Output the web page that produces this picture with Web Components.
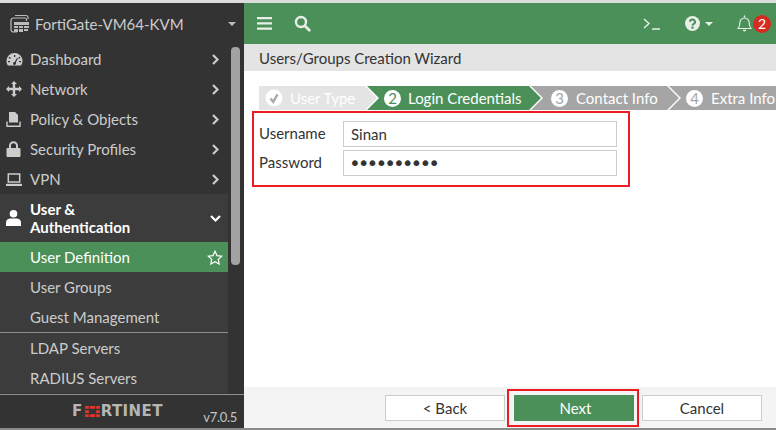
<!DOCTYPE html>
<html>
<head>
<meta charset="utf-8">
<style>
  html, body { margin: 0; padding: 0; background: #fff; }
  body { width: 776px; height: 430px; overflow: hidden; font-family: Lato, "Liberation Sans", sans-serif; }
</style>
</head>
<body>
<fg-app>
  <fg-sidebar slot="side" title="FortiGate-VM64-KVM" version="v7.0.5">
    <fg-nav-item icon="dash" arrow="right">Dashboard</fg-nav-item>
    <fg-nav-item icon="move" arrow="right">Network</fg-nav-item>
    <fg-nav-item icon="policy" arrow="right">Policy &amp; Objects</fg-nav-item>
    <fg-nav-item icon="lock" arrow="right">Security Profiles</fg-nav-item>
    <fg-nav-item icon="laptop" arrow="right">VPN</fg-nav-item>
    <fg-nav-item icon="user" arrow="down" open>User &amp;<br>Authentication</fg-nav-item>
    <fg-nav-item sub active>User Definition</fg-nav-item>
    <fg-nav-item sub>User Groups</fg-nav-item>
    <fg-nav-item sub divider>Guest Management</fg-nav-item>
    <fg-nav-item sub>LDAP Servers</fg-nav-item>
    <fg-nav-item sub>RADIUS Servers</fg-nav-item>
  </fg-sidebar>
  <fg-topbar slot="top"></fg-topbar>
  <fg-wizard slot="main" heading="Users/Groups Creation Wizard">
    <fg-stepper slot="steps">
      <fg-step state="done" width="118" pad="6" gap="7">User Type</fg-step>
      <fg-step state="active" num="2" width="174" pad="17" gap="7">Login Credentials</fg-step>
      <fg-step num="3" width="148" pad="20" gap="8">Contact Info</fg-step>
      <fg-step num="4" width="120" pad="17" gap="8">Extra Info</fg-step>
    </fg-stepper>
    <fg-form slot="form">
      <fg-field label="Username" value="Sinan"></fg-field>
      <fg-field label="Password" value="••••••••••" secret></fg-field>
    </fg-form>
    <fg-button slot="actions">&lt; Back</fg-button>
    <fg-button slot="actions" primary>Next</fg-button>
    <fg-button slot="actions">Cancel</fg-button>
  </fg-wizard>
</fg-app>

<script>
const ICONS = {
  dash: '<svg width="17" height="15" viewBox="0 0 17 15"><path fill="#ccc" fill-rule="evenodd" d="M8.5 1A8 8 0 0 0 .5 9c0 1.7.5 3.2 1.4 4.5h13.2A8 8 0 0 0 16.500 9a8 8 0 0 0-8-8ZM8 3h1.300v2H8ZM3.500 4.800l1.400 1.300-1 1L2.600 5.800ZM13.500 4.800l.9 1-1.300 1.300-1-1ZM11 6l1 .6L9.800 10.500a1.500 1.500 0 1 1-1.100-.6ZM2 9h2v1.300H2ZM13 9h2v1.300h-2Z"/></svg>',
  move: '<svg width="16" height="16" viewBox="0 0 16 16"><path fill="#ccc" d="M8 0l3 3H9.200v3.800H13V5l3 3-3 3V9.200H9.200V13H11l-3 3-3-3h1.800V9.200H3V11L0 8l3-3v1.800h3.800V3H5Z"/></svg>',
  policy: '<svg width="15" height="15" viewBox="0 0 15 15"><path fill="#ccc" d="M3 0h6l3 3v7.500H3Z"/><path fill="none" stroke="#ccc" stroke-width="1.400" d="M1 9.500v4.800h13V9.500"/></svg>',
  lock: '<svg width="15" height="16" viewBox="0 0 15 16"><path fill="#ccc" d="M3 7V4.800a4.500 4.500 0 0 1 9 0V7h1.500a1 1 0 0 1 1 1v7a1 1 0 0 1-1 1H1.500a1 1 0 0 1-1-1V8a1 1 0 0 1 1-1ZM5 7h5V4.800a2.500 2.500 0 0 0-5 0Z"/></svg>',
  laptop: '<svg width="16" height="13" viewBox="0 0 16 13"><path fill="none" stroke="#ccc" stroke-width="1.500" d="M2.300 1h11.400v8H2.300Z"/><path fill="#ccc" d="M0 10.800h16V13H0Z"/></svg>',
  user: '<svg width="15" height="16" viewBox="0 0 15 16"><circle cx="7.500" cy="3.800" r="3.800" fill="#fff"/><path fill="#fff" d="M0 16v-3.500C0 9.800 2.200 8.500 4.500 8.500h6c2.300 0 4.500 1.300 4.500 4V16Z"/></svg>'
};
const CHEVRON = {
  right: '<svg width="7" height="11" viewBox="0 0 7 11"><path fill="none" stroke="#ccc" stroke-width="2.200" d="M1 1l4.500 4.500L1 10"/></svg>',
  down: '<svg width="11" height="7" viewBox="0 0 11 7"><path fill="none" stroke="#fff" stroke-width="2.200" d="M1 1l4.500 4.500L10 1"/></svg>'
};
const STAR = '<svg width="16" height="15" viewBox="0 0 16 15"><path fill="none" stroke="#fff" stroke-width="1.200" d="M8 1.300l2 4.300 4.700.6-3.400 3.200.9 4.600L8 11.700 3.800 14l.9-4.600L1.300 6.200 6 5.600Z"/></svg>';

class FgApp extends HTMLElement {
  constructor() {
    super();
    this.attachShadow({ mode: 'open' }).innerHTML = `
      <style>
        :host { display: grid; grid-template-columns: 244px 532px; grid-template-rows: 41px 384px; padding-top: 3px; height: 427px; box-sizing: border-box; position: relative; background: #fff; }
        :host::before { content: ""; position: absolute; left: 0; right: 0; top: 0; height: 3px; background: #dcdcdc; }
        :host::after { content: ""; position: absolute; left: 0; right: 0; top: 428px; height: 2px; background: #8a8a8a; }
        .side { grid-row: 1 / 3; display: block; min-height: 0; }
      </style>
      <div class="side"><slot name="side"></slot></div>
      <slot name="top"></slot>
      <slot name="main"></slot>`;
  }
}

class FgSidebar extends HTMLElement {
  constructor() {
    super();
    this.attachShadow({ mode: 'open' }).innerHTML = `
      <style>
        :host { display: flex; flex-direction: column; width: 244px; height: 425px; background: #333; color: #ccc; font: 15px/20px Lato, sans-serif; }
        .head { height: 41px; display: flex; align-items: center; padding-left: 10px; box-sizing: border-box; flex: none; }
        .head svg.dev { margin-right: 5px; }
        .name { flex: 1; font-size: 15px; }
        .caret { width: 0; height: 0; border: 4px solid transparent; border-top: 4px solid #bbb; border-bottom: 0; margin-right: 8px; }
        .body { height: 350px; display: flex; flex: none; overflow: hidden; }
        .menu { width: 228px; flex: none; }
        .track { width: 16px; flex: none; padding: 3px 4px 0 3px; box-sizing: border-box; }
        .thumb { width: 9px; height: 218px; background: #a3a3a3; border-radius: 4px; }
        .foot { height: 34px; flex: none; border-top: 1px solid #8f8f8f; display: flex; position: relative; box-sizing: border-box; }
        .logo { position: absolute; left: 72px; top: 10px; display: flex; align-items: center; color: #b5b5b5; font: 700 15px/13px "DejaVu Sans", sans-serif; letter-spacing: 0.400px; }
        .logo svg { margin: 0 1px 0 2px; }
        .ver { position: absolute; right: 7px; top: 12px; font-size: 13px; line-height: 20px; letter-spacing: -0.300px; color: #c4c4c4; }
      </style>
      <div class="head">
        <svg class="dev" width="20" height="20" viewBox="0 0 20 20"><path fill="none" stroke="#bbb" stroke-width="1.200" d="M5 1.500h11a2 2 0 0 1 2 2V5M3 4h12a1.500 1.500 0 0 1 1.500 1.500V7M3.500 4A2.500 2.500 0 0 0 1 6.500v9A2.500 2.500 0 0 0 3.500 18H7"/><path fill="#bbb" d="M4 8h15v3H4ZM4 12h4v2H4ZM9 12h4v2H9ZM14 12h5v2h-5ZM4 15h4v3H4ZM9 15h4v3H9ZM14 15h4v2h-4Z"/></svg>
        <span class="name">${this.getAttribute('title')}</span>
        <span class="caret"></span>
      </div>
      <div class="body">
        <div class="menu"><slot></slot></div>
        <div class="track"><div class="thumb"></div></div>
      </div>
      <div class="foot">
        <div class="logo">F<svg width="15" height="11" viewBox="0 0 16 12"><path fill="#e0362c" d="M0 0h4v3H0ZM5 0h6v3H5ZM12 0h4v3h-4ZM0 4.500h4v3H0ZM12 4.500h4v3h-4ZM0 9h4v3H0ZM5 9h6v3H5ZM12 9h4v3h-4Z"/></svg>RTINET</div>
        <div class="ver">${this.getAttribute('version')}</div>
      </div>`;
  }
}

class FgNavItem extends HTMLElement {
  constructor() {
    super();
    const icon = ICONS[this.getAttribute('icon')] || '';
    const arrow = CHEVRON[this.getAttribute('arrow')] || '';
    const active = this.hasAttribute('active');
    this.attachShadow({ mode: 'open' }).innerHTML = `
      <style>
        :host { display: block; }
        .row { display: flex; align-items: center; height: 30px; box-sizing: border-box; padding-left: 6px; color: #ccc; font-size: 15px; line-height: 18px; }
        .ic { width: 24px; flex: none; display: flex; align-items: center; }
        .label { flex: 1; }
        .end { width: 17px; flex: none; display: flex; justify-content: flex-start; padding-left: 1px; box-sizing: border-box; }
        :host([sub]) .row { padding-left: 30px; }
        :host([open]) .row { height: 48px; background: #3c3c3c; color: #fff; font-weight: 700; }
        :host([open]) .end { width: 18px; padding-left: 0; }
        :host([sub]) { background: #3c3c3c; }
        :host([active]) .row { background: #4a9058; color: #fff; }
        :host([active]) .end { padding-left: 0; margin-right: 5px; width: 16px; }
        :host([divider]) { border-bottom: 1px solid #8f8f8f; }
        :host([divider]) .row { color: #ccc; }
      </style>
      <div class="row">
        ${icon ? `<span class="ic">${icon}</span>` : ''}
        <span class="label"><slot></slot></span>
        ${arrow ? `<span class="end">${arrow}</span>` : ''}
        ${active ? `<span class="end">${STAR}</span>` : ''}
      </div>`;
  }
}

class FgTopbar extends HTMLElement {
  constructor() {
    super();
    this.attachShadow({ mode: 'open' }).innerHTML = `
      <style>
        :host { display: flex; align-items: center; height: 41px; background: #4a9058; box-sizing: border-box; padding-left: 13px; position: relative; }
        svg { display: block; flex: none; }
        .search { margin-left: 22px; }
        .sp { flex: 1; }
        .cli { margin-right: 25px; }
        .caret { width: 0; height: 0; border: 4px solid transparent; border-top: 4px solid #e8efe9; border-bottom: 0; margin: 0 24px 0 5px; }
        .bell { margin-right: 24px; }
        .badge { position: absolute; right: 5px; top: 12px; width: 18px; height: 18px; border-radius: 50%; background: #d42c20; color: #fff; font: 14px/18px Lato, sans-serif; text-align: center; }
      </style>
      <svg width="15" height="13" viewBox="0 0 15 13"><path fill="#e8efe9" d="M0 0h15v2.200H0ZM0 5.300h15v2.200H0ZM0 10.600h15v2.200H0Z"/></svg>
      <svg class="search" width="17" height="17" viewBox="0 0 17 17"><circle cx="7" cy="7" r="5" fill="none" stroke="#e8efe9" stroke-width="2.400"/><path stroke="#e8efe9" stroke-width="2.800" stroke-linecap="round" d="M11 11l4.300 4.300"/></svg>
      <span class="sp"></span>
      <svg class="cli" width="17" height="12" viewBox="0 0 17 12"><path fill="none" stroke="#e8efe9" stroke-width="1.400" d="M1 1l5 4.500L1 10M9 11h8"/></svg>
      <svg width="15" height="15" viewBox="0 0 15 15"><circle cx="7.500" cy="7.500" r="7.500" fill="#e8efe9"/><path fill="none" stroke="#4a9058" stroke-width="2" d="M5 5.800a2.500 2.300 0 1 1 3.700 2c-.8.500-1.200.9-1.200 1.700"/><path fill="#4a9058" d="M6.400 10.500h2.200v2.200H6.400Z"/></svg>
      <span class="caret"></span>
      <svg class="bell" width="15" height="17" viewBox="0 0 15 17"><path fill="none" stroke="#e8efe9" stroke-width="1.100" d="M1 13.500c1.200-1.300 1.800-2.500 1.800-5.500a4.700 5 0 0 1 9.400 0c0 3 .6 4.200 1.800 5.500Z"/><path fill="#e8efe9" d="M5.800 14.700h3.400a1.700 1.700 0 0 1-3.400 0ZM6.800.5h1.400v2H6.800Z"/></svg>
      <span class="badge">2</span>`;
  }
}

class FgWizard extends HTMLElement {
  constructor() {
    super();
    this.attachShadow({ mode: 'open' }).innerHTML = `
      <style>
        :host { display: flex; flex-direction: column; width: 532px; height: 384px; background: #fff; overflow: hidden; }
        .title { height: 27px; flex: none; background: #e4e4e4; color: #333; font: 15px/28px Lato, sans-serif; padding-left: 15px; }
        .content { flex: 1; padding: 15px 0 0 8px; box-sizing: border-box; min-height: 0; }
        .foot { height: 41px; flex: none; background: #f4f4f4; display: flex; align-items: flex-start; padding: 8px 0 0 141px; box-sizing: border-box; }
      </style>
      <div class="title">${this.getAttribute('heading')}</div>
      <div class="content">
        <slot name="steps"></slot>
        <slot name="form"></slot>
      </div>
      <div class="foot"><slot name="actions"></slot></div>`;
  }
}

class FgStepper extends HTMLElement {
  constructor() {
    super();
    this.attachShadow({ mode: 'open' }).innerHTML = `
      <style>
        :host { display: flex; height: 24px; margin-left: 7px; width: 517px; overflow: hidden; }
      </style>
      <slot></slot>`;
  }
}

class FgStep extends HTMLElement {
  constructor() {
    super();
    const state = this.getAttribute('state') || '';
    const done = state === 'done';
    const mark = done
      ? '<svg width="18" height="18" viewBox="0 0 18 18"><circle cx="9" cy="9" r="8.500" fill="#fff"/><path fill="none" stroke="#aaa" stroke-width="2.400" d="M5.500 9.500l2.700 3.300 4.300-7.500"/></svg>'
      : `<span class="num">${this.getAttribute('num')}</span>`;
    this.attachShadow({ mode: 'open' }).innerHTML = `
      <style>
        :host { display: flex; flex: none; align-items: center; height: 24px; box-sizing: border-box; margin-left: -10px; background: #a5a5a5; color: #fff; font: 15px/24px Lato, sans-serif; white-space: nowrap;
          clip-path: polygon(0 0, calc(100% - 12px) 0, 100% 50%, calc(100% - 12px) 100%, 0 100%, 12px 50%); }
        :host([state="done"]) { margin-left: 0; background: #e4e4e4; clip-path: polygon(0 0, calc(100% - 12px) 0, 100% 50%, calc(100% - 12px) 100%, 0 100%); }
        :host([state="active"]) { background: #4a9058; }
        .mark { display: flex; flex: none; }
        .num { width: 17px; height: 17px; border-radius: 50%; background: #fff; color: #a5a5a5; font-size: 15px; line-height: 17px; text-align: center; }
        :host([state="active"]) .num { color: #4a9058; }
      </style>
      <span class="mark">${mark}</span><span class="txt"><slot></slot></span>`;
    this.style.width = this.getAttribute('width') + 'px';
    this.style.paddingLeft = this.getAttribute('pad') + 'px';
    this.shadowRoot.querySelector('.txt').style.marginLeft = this.getAttribute('gap') + 'px';
  }
}

class FgForm extends HTMLElement {
  constructor() {
    super();
    this.attachShadow({ mode: 'open' }).innerHTML = `
      <style>
        :host { display: flex; flex-direction: column; gap: 3px; width: 378px; height: 76px; margin-top: 1px; box-sizing: border-box; border: 2px solid #ed1c24; padding: 8px 0 0 5px; }
      </style>
      <slot></slot>`;
  }
}

class FgField extends HTMLElement {
  constructor() {
    super();
    const secret = this.hasAttribute('secret');
    this.attachShadow({ mode: 'open' }).innerHTML = `
      <style>
        :host { display: flex; align-items: center; height: 26px; color: #333; font: 15px/20px Lato, sans-serif; }
        label { width: 84px; flex: none; margin-top: -2px; }
        .box { width: 274px; height: 26px; box-sizing: border-box; border: 1px solid #ccc; padding-left: 7px; line-height: 25px; color: #333; }
        .box.secret { font: 20px/25px "DejaVu Sans", sans-serif; letter-spacing: -3px; padding-left: 5px; color: #333; }
      </style>
      <label>${this.getAttribute('label')}</label>
      <div class="box${secret ? ' secret' : ''}">${this.getAttribute('value')}</div>`;
  }
}

class FgButton extends HTMLElement {
  constructor() {
    super();
    this.attachShadow({ mode: 'open' }).innerHTML = `
      <style>
        :host { display: block; position: relative; width: 120px; height: 26px; box-sizing: border-box; margin-right: 9px; background: #fff; border: 1px solid #ccc; color: #333; font: 15px/24px Lato, sans-serif; text-align: center; }
        :host([primary]) { background: #4a9058; border-color: #4a9058; color: #fff; margin-right: 8px; padding-left: 3px; }
        :host([primary])::after { content: ""; position: absolute; left: -8px; right: -6px; top: -7px; bottom: -7px; border: 2px solid #ed1c24; }
      </style>
      <slot></slot>`;
  }
}

customElements.define('fg-app', FgApp);
customElements.define('fg-sidebar', FgSidebar);
customElements.define('fg-nav-item', FgNavItem);
customElements.define('fg-topbar', FgTopbar);
customElements.define('fg-wizard', FgWizard);
customElements.define('fg-stepper', FgStepper);
customElements.define('fg-step', FgStep);
customElements.define('fg-form', FgForm);
customElements.define('fg-field', FgField);
customElements.define('fg-button', FgButton);
</script>
</body>
</html>
